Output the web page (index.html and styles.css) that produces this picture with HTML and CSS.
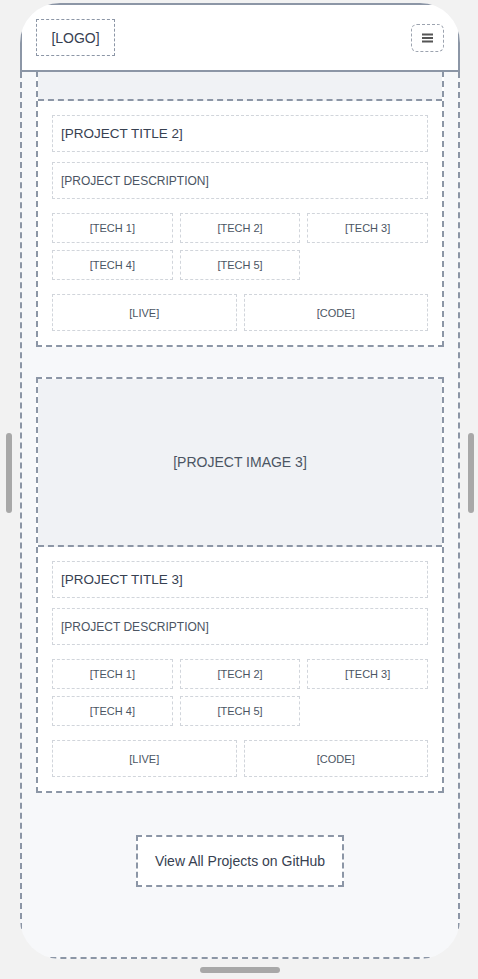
FILE: index.html
```html
<!DOCTYPE html>
<html lang="en">
<head>
  <meta charset="UTF-8">
  <title>Projects - Mobile</title>
  <link rel="stylesheet" href="styles.css">
</head>
<body>
  <div class="device">
    <div class="side-btn"></div>

    <div class="phone-col">
      <div class="phone">
        <header class="topbar">
          <div class="logo">[LOGO]</div>
          <button class="menu-btn" aria-label="Menu">
            <svg width="11" height="10" viewBox="0 0 11 10">
              <rect x="0" y="0.5" width="11" height="2" fill="#555"/>
              <rect x="0" y="4" width="11" height="2" fill="#555"/>
              <rect x="0" y="7.5" width="11" height="2" fill="#555"/>
            </svg>
          </button>
        </header>

        <!-- list is pinned to the bottom, so it reads as scrolled down -->
        <main class="screen">
          <div class="projects">
            <div class="card">
              <div class="card-img">[PROJECT IMAGE 2]</div>
              <div class="card-body">
                <div class="box title">[PROJECT TITLE 2]</div>
                <div class="box desc">[PROJECT DESCRIPTION]</div>
                <div class="tech">
                  <div class="tag">[TECH 1]</div>
                  <div class="tag">[TECH 2]</div>
                  <div class="tag">[TECH 3]</div>
                  <div class="tag">[TECH 4]</div>
                  <div class="tag">[TECH 5]</div>
                </div>
                <div class="links">
                  <div class="link">[LIVE]</div>
                  <div class="link">[CODE]</div>
                </div>
              </div>
            </div>

            <div class="card">
              <div class="card-img">[PROJECT IMAGE 3]</div>
              <div class="card-body">
                <div class="box title">[PROJECT TITLE 3]</div>
                <div class="box desc">[PROJECT DESCRIPTION]</div>
                <div class="tech">
                  <div class="tag">[TECH 1]</div>
                  <div class="tag">[TECH 2]</div>
                  <div class="tag">[TECH 3]</div>
                  <div class="tag">[TECH 4]</div>
                  <div class="tag">[TECH 5]</div>
                </div>
                <div class="links">
                  <div class="link">[LIVE]</div>
                  <div class="link">[CODE]</div>
                </div>
              </div>
            </div>
          </div>

          <a class="github-btn" href="#">View All Projects on GitHub</a>
        </main>
      </div>
      <div class="home-bar"></div>
    </div>

    <div class="side-btn"></div>
  </div>
</body>
</html>
```

FILE: styles.css
```css
body {
  margin: 0;
  padding-top: 3px;
  background: #f2f2f2;
  font-family: 'Liberation Sans', Arial, sans-serif;
  color: #4b5563;
}

.device {
  display: flex;
  align-items: flex-start;
  gap: 8px;
  padding-left: 6px;
}

.side-btn {
  width: 6px;
  height: 80px;
  margin-top: 430px;
  border-radius: 3px;
  background: #a8a8a8;
}

.phone-col {
  display: flex;
  flex-direction: column;
  align-items: center;
}

.phone {
  width: 440px;
  height: 956px;
  border-radius: 40px;
  overflow: hidden;
  display: flex;
  flex-direction: column;
  background: #f7f8fa;
}

.home-bar {
  width: 80px;
  height: 6px;
  margin-top: 8px;
  border-radius: 3px;
  background: #a8a8a8;
}

/* header */
.topbar {
  flex: none;
  height: 69px;
  box-sizing: border-box;
  border: 2px solid #8c96a6;
  background: #fff;
  padding: 0 14px;
  display: flex;
  align-items: center;
  justify-content: space-between;
}

.logo {
  width: 79px;
  height: 37px;
  box-sizing: border-box;
  border: 1px dashed #8c96a6;
  display: flex;
  align-items: center;
  justify-content: center;
  font-size: 14px;
  color: #374151;
}

.menu-btn {
  width: 33px;
  height: 28px;
  padding: 0;
  border: 1px dashed #9ca3af;
  border-radius: 6px;
  background: #fff;
  display: flex;
  align-items: center;
  justify-content: center;
}

/* scrolled content */
.screen {
  flex: 1;
  min-height: 0;
  overflow: hidden;
  border: 2px dashed #8c96a6;
  border-top: none;
  padding: 0 14px 70px;
  display: flex;
  flex-direction: column;
  justify-content: flex-end;
}

.projects {
  flex: none;
  display: flex;
  flex-direction: column;
  gap: 30px;
}

.card {
  border: 2px dashed #8c96a6;
  background: #fff;
}

.card-img {
  height: 166px;
  background: #f0f2f5;
  border-bottom: 2px dashed #8c96a6;
  display: flex;
  align-items: center;
  justify-content: center;
  font-size: 14px;
  color: #4b5563;
}

.card-body {
  padding: 14px;
}

.box {
  height: 37px;
  box-sizing: border-box;
  border: 1px dashed #d1d5db;
  padding: 0 8px;
  display: flex;
  align-items: center;
}

.title {
  font-size: 13.5px;
  color: #374151;
  margin-bottom: 10px;
}

.desc {
  font-size: 12px;
  color: #4b5563;
  margin-bottom: 14px;
}

.tech {
  display: grid;
  grid-template-columns: repeat(3, 1fr);
  gap: 7px;
  margin-bottom: 14px;
}

.tag,
.link {
  box-sizing: border-box;
  border: 1px dashed #d1d5db;
  display: flex;
  align-items: center;
  justify-content: center;
  font-size: 11px;
  color: #4b5563;
}

.tag {
  height: 30px;
}

.links {
  display: grid;
  grid-template-columns: 1fr 1fr;
  gap: 7px;
}

.link {
  height: 37px;
}

.github-btn {
  flex: none;
  align-self: center;
  margin-top: 42px;
  height: 52px;
  box-sizing: border-box;
  padding: 0 17px;
  border: 2px dashed #8c96a6;
  background: #fff;
  display: flex;
  align-items: center;
  font-size: 14px;
  color: #374151;
  text-decoration: none;
}
```
